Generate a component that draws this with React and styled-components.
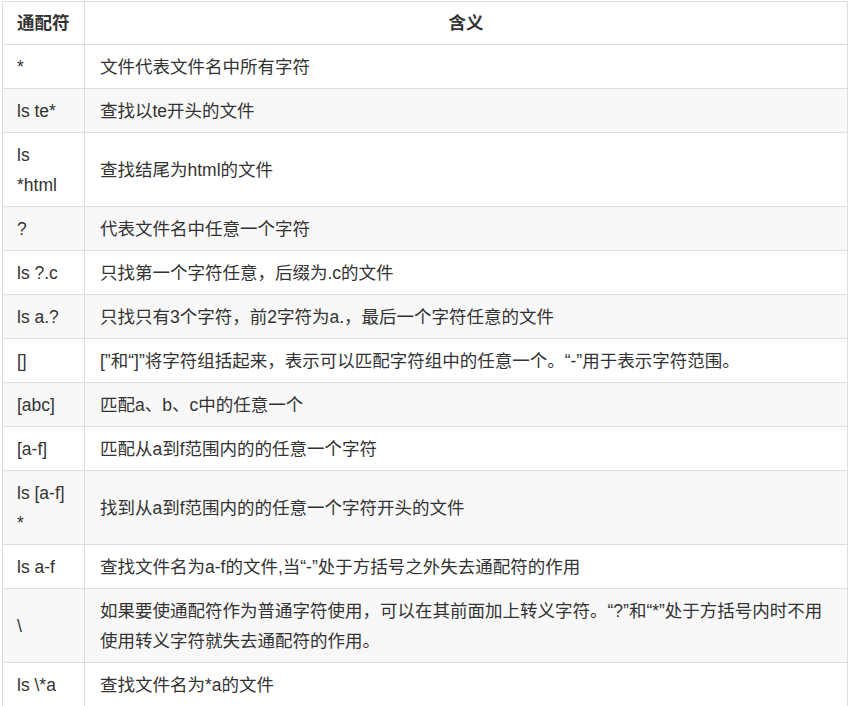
import React from 'react';
import styled, { createGlobalStyle } from 'styled-components';

const GlobalStyle = createGlobalStyle`
  body {
    margin: 0;
    background: #fff;
    font-family: "Liberation Sans", "Noto Sans CJK SC", sans-serif;
    color: #333;
  }
`

const Page = styled.div`
  padding: 1px 2px 0 2px;
`

const Table = styled.table`
  width: 846px;
  table-layout: fixed;
  border-collapse: collapse;
  font-size: 17.5px;
  line-height: 30px;
`

const HeadCell = styled.th`
  border: 1px solid #ddd;
  padding: 6px 14px;
  font-weight: bold;
  color: #333;
  text-align: ${props => props.$center ? 'center' : 'left'};
`

const Row = styled.tr`
  background: ${props => props.$striped ? '#f8f8f8' : '#fff'};
`

const Cell = styled.td`
  border: 1px solid #ddd;
  padding: 6.5px 15px 6.5px ${props => props.$first ? '14px' : '15px'};
  vertical-align: middle;
  word-wrap: break-word;
`

const Keep = styled.span`
  white-space: nowrap;
`

const rows = [
  ['*', '文件代表文件名中所有字符'],
  ['ls te*', '查找以te开头的文件'],
  ['ls *html', '查找结尾为html的文件'],
  ['?', '代表文件名中任意一个字符'],
  ['ls ?.c', '只找第一个字符任意，后缀为.c的文件'],
  ['ls a.?', '只找只有3个字符，前2字符为a.，最后一个字符任意的文件'],
  ['[]', '[”和“]”将字符组括起来，表示可以匹配字符组中的任意一个。“-”用于表示字符范围。'],
  ['[abc]', '匹配a、b、c中的任意一个'],
  ['[a-f]', '匹配从a到f范围内的的任意一个字符'],
  [<>ls <Keep>[a-f]</Keep><wbr />*</>, '找到从a到f范围内的的任意一个字符开头的文件'],
  ['ls a-f', '查找文件名为a-f的文件,当“-”处于方括号之外失去通配符的作用'],
  ['\\', '如果要使通配符作为普通字符使用，可以在其前面加上转义字符。“?”和“*”处于方括号内时不用使用转义字符就失去通配符的作用。'],
  ['ls \\*a', '查找文件名为*a的文件'],
]

const App = () => {
  return (
    <Page>
      <GlobalStyle />
      <Table>
        <colgroup>
          <col style={{ width: 82 }} />
          <col />
        </colgroup>
        <thead>
          <tr>
            <HeadCell>通配符</HeadCell>
            <HeadCell $center>含义</HeadCell>
          </tr>
        </thead>
        <tbody>
          {rows.map((row, index) =>
            <Row key={index} $striped={index % 2 === 1}>
              <Cell $first>{row[0]}</Cell>
              <Cell>{row[1]}</Cell>
            </Row>
          )}
        </tbody>
      </Table>
    </Page>
  )
}

export default App;
